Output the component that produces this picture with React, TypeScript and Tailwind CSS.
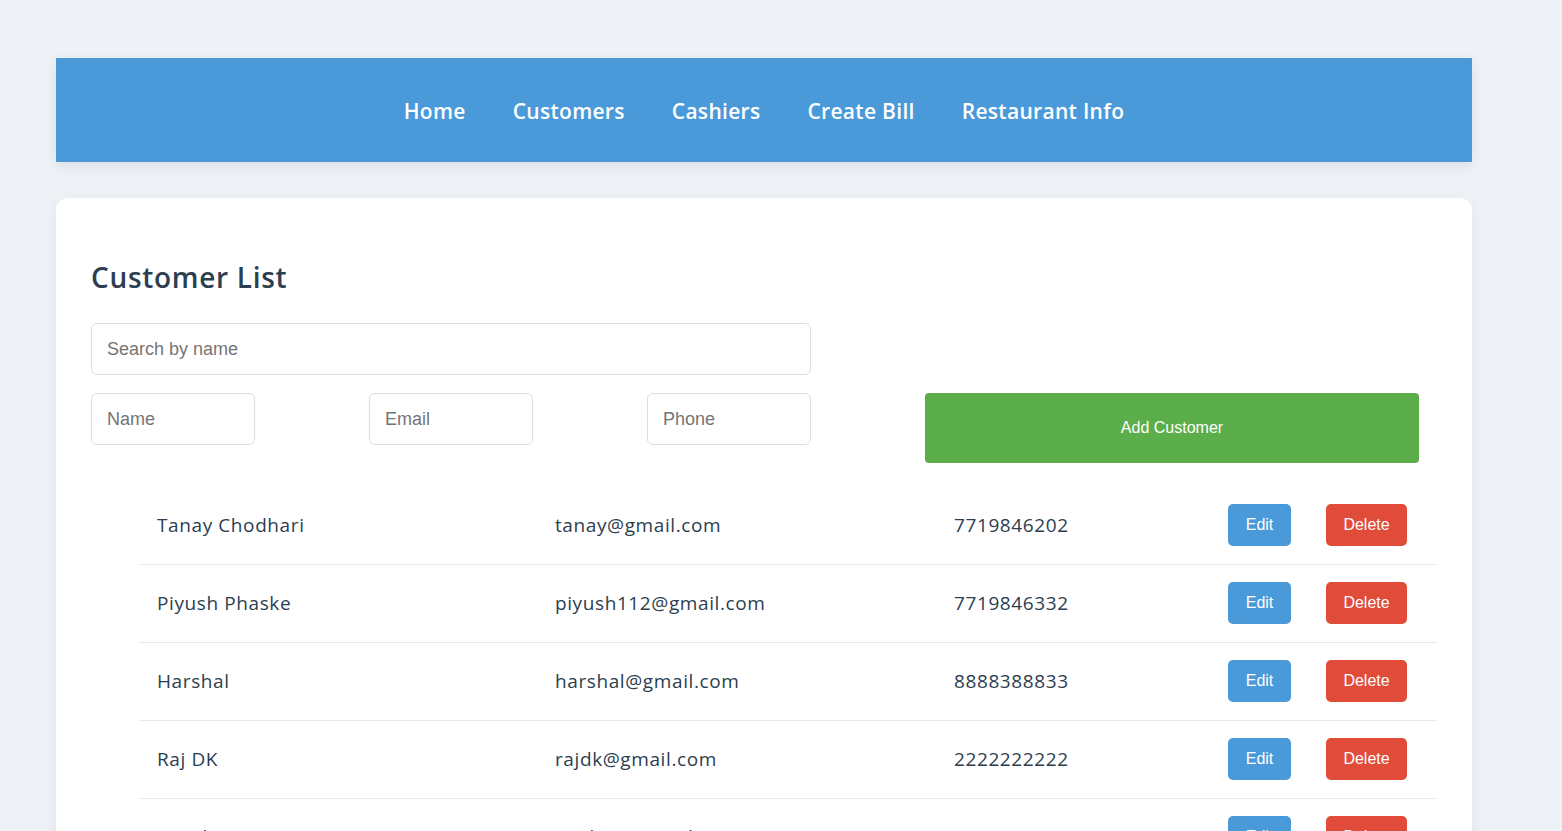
import * as React from 'react';

type Customer = { name: string; email: string; phone: string };

const customers: Customer[] = [
    { name: 'Tanay Chodhari', email: 'tanay@gmail.com', phone: '7719846202' },
    { name: 'Piyush Phaske', email: 'piyush112@gmail.com', phone: '7719846332' },
    { name: 'Harshal', email: 'harshal@gmail.com', phone: '8888388833' },
    { name: 'Raj DK', email: 'rajdk@gmail.com', phone: '2222222222' },
    { name: 'Raj Sharma', email: 'rajsh18@gmail.com', phone: '9999999999' }
];

const navItems = ['Home', 'Customers', 'Cashiers', 'Create Bill', 'Restaurant Info'];

export default function App() {
    const [search, setSearch] = React.useState('');

    const rows = customers.filter((c) => c.name.toLowerCase().includes(search.toLowerCase()));

    return (
        <div className="min-h-screen bg-[#eef2f7] px-[56px] pt-[58px] pb-10 pr-[90px] font-['Open_Sans',sans-serif] text-[#2c3e50]">
            <nav className="flex h-[104px] items-center justify-center gap-[47px] bg-[#4a9ada] pt-[3px] shadow-[0_4px_14px_rgba(0,0,0,0.08)]">
                {navItems.map((item) => (
                    <a key={item} href="#" className="text-[21px] font-semibold tracking-[0.3px] text-white">
                        {item}
                    </a>
                ))}
            </nav>

            <div className="mt-[36px] rounded-xl bg-white px-[35px] pt-[59px] pb-10 shadow-[0_4px_16px_rgba(0,0,0,0.06)]">
                <h2 className="mb-[26px] h-10 text-[28px] leading-10 font-semibold tracking-[0.7px] text-[#2c3e50]">Customer List</h2>

                <input
                    value={search}
                    onChange={(e) => setSearch(e.target.value)}
                    placeholder="Search by name"
                    className="block h-[52px] w-[720px] rounded-[6px] border border-[#dddddd] px-[15px] font-['Liberation_Sans',sans-serif] text-[18px] outline-none placeholder:text-[#757575]"
                />

                <div className="mt-[18px] flex items-start gap-[114px]">
                    {['Name', 'Email', 'Phone'].map((p) => (
                        <input
                            key={p}
                            placeholder={p}
                            className="h-[52px] w-[164px] rounded-[6px] border border-[#dddddd] px-[15px] font-['Liberation_Sans',sans-serif] text-[18px] outline-none placeholder:text-[#757575]"
                        />
                    ))}
                    <button className="h-[70px] w-[494px] rounded-[4px] bg-[#5cae4b] font-['Liberation_Sans',sans-serif] text-[16px] text-white">
                        Add Customer
                    </button>
                </div>

                <table className="mt-[23px] ml-[48px] w-[1298px] table-fixed border-collapse text-[19px] tracking-[0.6px]">
                    <colgroup>
                        <col className="w-[398px]" />
                        <col className="w-[399px]" />
                        <col className="w-[274px]" />
                        <col className="w-[98px]" />
                        <col className="w-[129px]" />
                    </colgroup>
                    <tbody>
                        {rows.map((c) => (
                            <tr key={c.email} className="h-[78px] border-b border-[#e8e8e8]">
                                <td className="pl-[18px]">{c.name}</td>
                                <td className="pl-[18px]">{c.email}</td>
                                <td className="pl-[18px]">{c.phone}</td>
                                <td className="pl-[18px]">
                                    <button className="h-[42px] w-[63px] rounded-[5px] bg-[#4a9ada] font-['Liberation_Sans',sans-serif] text-[16px] tracking-normal text-white">
                                        Edit
                                    </button>
                                </td>
                                <td className="pl-[18px]">
                                    <button className="h-[42px] w-[81px] rounded-[5px] bg-[#e04b3a] font-['Liberation_Sans',sans-serif] text-[16px] tracking-normal text-white">
                                        Delete
                                    </button>
                                </td>
                            </tr>
                        ))}
                    </tbody>
                </table>
            </div>
        </div>
    );
}
